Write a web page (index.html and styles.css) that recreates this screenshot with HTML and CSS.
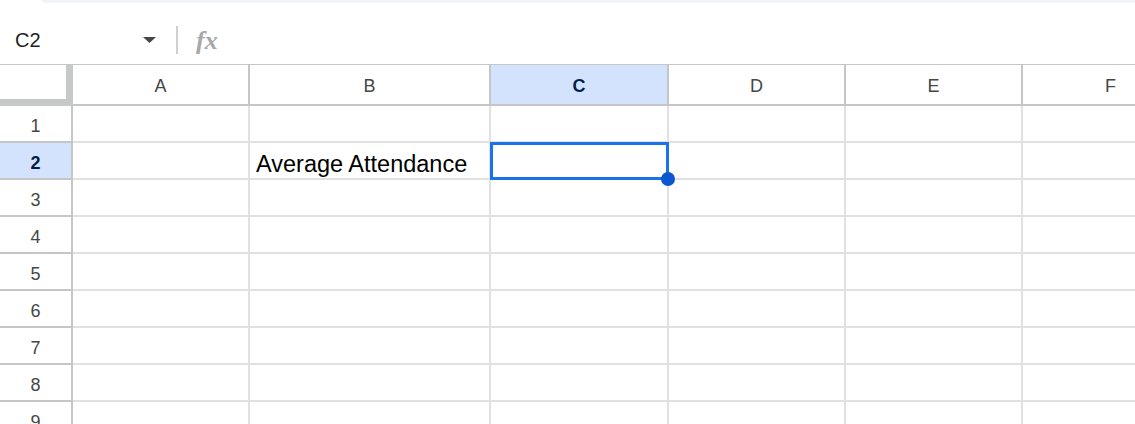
FILE: index.html
```html
<!DOCTYPE html>
<html lang="en">
<head>
    <meta charset="UTF-8">
    <title>Sheet</title>
    <link rel="stylesheet" href="styles.css">
</head>
<body>

<div class="top-strip"></div>

<div class="formula-bar">
    <div class="name-box">
        <span class="cell-ref">C2</span>
        <svg class="caret" width="13" height="6" viewBox="0 0 13 6"><polygon points="0,0 13,0 6.5,6" fill="#444746"/></svg>
    </div>
    <div class="divider"></div>
    <span class="fx">fx</span>
</div>

<div class="sheet">
    <div class="corner"></div>
    <div class="col-head">A</div>
    <div class="col-head">B</div>
    <div class="col-head active">C</div>
    <div class="col-head">D</div>
    <div class="col-head">E</div>
    <div class="col-head">F</div>

    <div class="row-head">1</div>
    <div class="cell"></div><div class="cell"></div><div class="cell"></div><div class="cell"></div><div class="cell"></div><div class="cell"></div>

    <div class="row-head active">2</div>
    <div class="cell"></div><div class="cell text">Average Attendance</div><div class="cell"></div><div class="cell"></div><div class="cell"></div><div class="cell"></div>

    <div class="row-head">3</div>
    <div class="cell"></div><div class="cell"></div><div class="cell"></div><div class="cell"></div><div class="cell"></div><div class="cell"></div>

    <div class="row-head">4</div>
    <div class="cell"></div><div class="cell"></div><div class="cell"></div><div class="cell"></div><div class="cell"></div><div class="cell"></div>

    <div class="row-head">5</div>
    <div class="cell"></div><div class="cell"></div><div class="cell"></div><div class="cell"></div><div class="cell"></div><div class="cell"></div>

    <div class="row-head">6</div>
    <div class="cell"></div><div class="cell"></div><div class="cell"></div><div class="cell"></div><div class="cell"></div><div class="cell"></div>

    <div class="row-head">7</div>
    <div class="cell"></div><div class="cell"></div><div class="cell"></div><div class="cell"></div><div class="cell"></div><div class="cell"></div>

    <div class="row-head">8</div>
    <div class="cell"></div><div class="cell"></div><div class="cell"></div><div class="cell"></div><div class="cell"></div><div class="cell"></div>

    <div class="row-head">9</div>
    <div class="cell"></div><div class="cell"></div><div class="cell"></div><div class="cell"></div><div class="cell"></div><div class="cell"></div>

    <!-- selected cell C2 -->
    <div class="selection"></div>
    <div class="fill-handle"></div>
</div>

</body>
</html>
```

FILE: styles.css
```css
body {
    margin: 0;
    padding: 0;
    background-color: #fff;
    font-family: "Liberation Sans", Arial, sans-serif;
    height: 424px;
    overflow: hidden;
}
.top-strip {
    height: 3px;
    margin-left: 42px;
    background-color: #f0f4f9;
    border-bottom-left-radius: 10px;
}
.formula-bar {
    height: 48px;
    padding-top: 13px;
    display: flex;
    align-items: center;
}
.name-box {
    width: 176px;
    box-sizing: border-box;
    padding-left: 15px;
    display: flex;
    align-items: center;
}
.cell-ref {
    font-size: 20px;
    color: #1f1f1f;
    width: 128px;
}
.divider {
    width: 2px;
    height: 28px;
    background-color: #d0d0d0;
}
.fx {
    margin-left: 18px;
    font-family: "Liberation Serif", serif;
    font-style: italic;
    font-weight: bold;
    font-size: 26px;
    color: #a8a8a8;
    position: relative;
    top: 1px;
}
.sheet {
    position: relative;
    display: grid;
    grid-template-columns: 73px 177px 241px 178px 177px 177px 177px;
    grid-template-rows: 42px;
    grid-auto-rows: 37px;
    font-size: 18px;
    color: #444746;
    overflow: hidden;
}
.corner {
    box-sizing: border-box;
    border-top: 1px solid #c4c7c5;
    border-right: 7px solid #c7c9c8;
    border-bottom: 7px solid #c7c9c8;
}
.col-head {
    box-sizing: border-box;
    border-top: 1px solid #c4c7c5;
    border-bottom: 2px solid #c4c7c5;
    border-right: 2px solid #c4c7c5;
    display: flex;
    align-items: center;
    justify-content: center;
    padding-top: 3px;
}
.col-head.active,
.row-head.active {
    background-color: #d3e3fd;
    color: #041e49;
    font-weight: bold;
}
.row-head {
    box-sizing: border-box;
    border-right: 2px solid #c4c7c5;
    border-bottom: 2px solid #c4c7c5;
    display: flex;
    align-items: center;
    justify-content: center;
    padding-top: 5px;
}
.cell {
    box-sizing: border-box;
    border-right: 2px solid #e1e1e1;
    border-bottom: 2px solid #e1e1e1;
}
.cell.text {
    display: flex;
    align-items: center;
    padding-left: 6px;
    padding-top: 7px;
    font-size: 23.5px;
    color: #000;
    white-space: nowrap;
}
.selection {
    position: absolute;
    left: 490px;
    top: 78px;
    width: 179px;
    height: 38px;
    box-sizing: border-box;
    border: 3px solid #1a73e8;
}
.fill-handle {
    position: absolute;
    left: 661px;
    top: 108px;
    width: 14px;
    height: 14px;
    border-radius: 50%;
    background-color: #0b57d0;
}
```
